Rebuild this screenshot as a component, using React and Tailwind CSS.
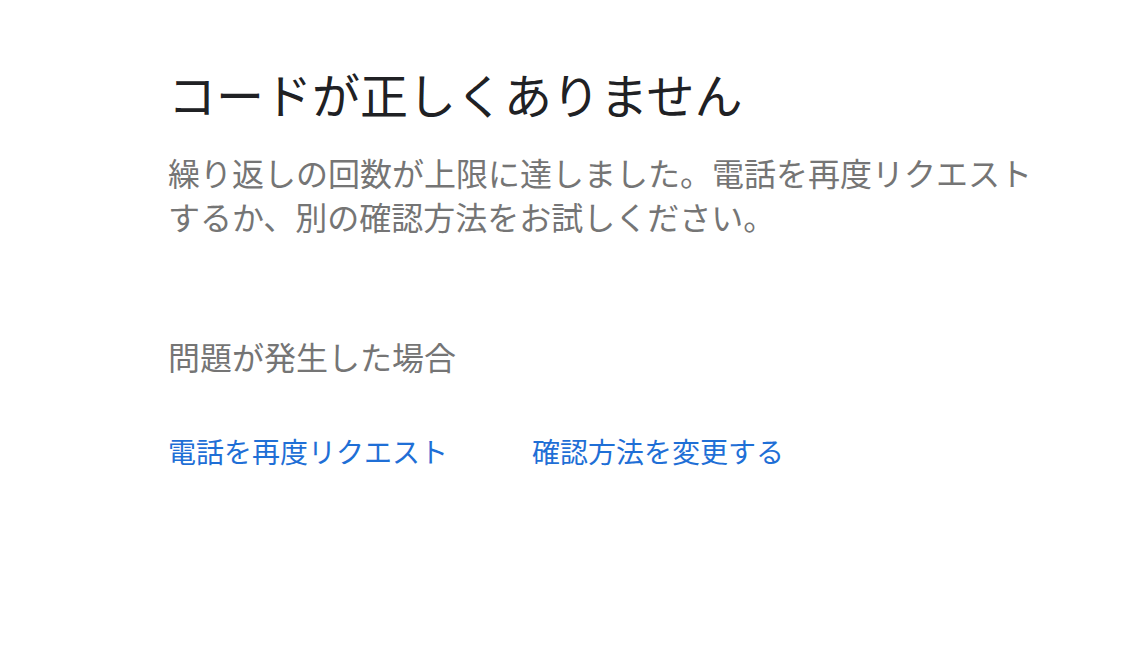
import React from 'react';

const font = { fontFamily: '"Noto Sans CJK JP", "Noto Sans", sans-serif' };

export default function App() {
  return (
    <div className="w-[1146px] h-[650px] bg-white pl-[168px] pt-[65px]" style={font}>
      <h1 className="text-[48px] leading-[56px] font-normal text-[#202124]">
        コードが正しくありません
      </h1>
      <p className="mt-[29px] w-[880px] text-[32px] leading-[44px] text-[#757575]">
        繰り返しの回数が上限に達しました。電話を再度リクエストするか、別の確認方法をお試しください。
      </p>
      <h2 className="mt-[96px] text-[32px] leading-[44px] font-normal text-[#757575]">
        問題が発生した場合
      </h2>
      <div className="mt-[53px] flex gap-[84px] text-[28px] leading-[40px] text-[#1f6fd6]">
        <a href="#" className="block">電話を再度リクエスト</a>
        <a href="#" className="block">確認方法を変更する</a>
      </div>
    </div>
  );
}
